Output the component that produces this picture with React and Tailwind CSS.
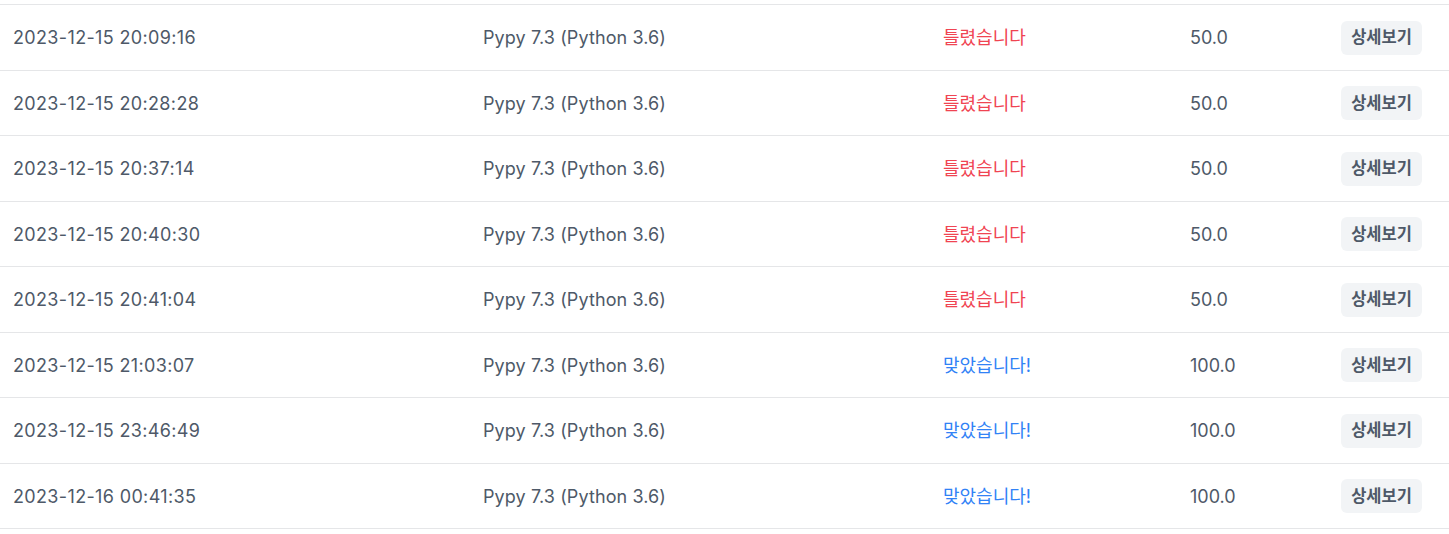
import React from 'react'

const rows = [
  { time: '2023-12-15 20:09:16', ok: false, score: '50.0' },
  { time: '2023-12-15 20:28:28', ok: false, score: '50.0' },
  { time: '2023-12-15 20:37:14', ok: false, score: '50.0' },
  { time: '2023-12-15 20:40:30', ok: false, score: '50.0' },
  { time: '2023-12-15 20:41:04', ok: false, score: '50.0' },
  { time: '2023-12-15 21:03:07', ok: true, score: '100.0' },
  { time: '2023-12-15 23:46:49', ok: true, score: '100.0' },
  { time: '2023-12-16 00:41:35', ok: true, score: '100.0' },
]

function App() {
  return (
    <div className="w-[1449px] h-[534px] bg-white overflow-hidden font-['Inter','Noto_Sans_CJK_KR',sans-serif]">
      <div className="h-[5px] border-b border-[#e5e6e8]" />
      {rows.map((r, i) => (
        <div
          key={i}
          className={`grid grid-cols-[470px_460px_247px_1fr] items-center border-b border-[#e5e6e8] text-[18px] text-[#4e5968] ${i % 2 === 0 ? 'h-[66px]' : 'h-[65px]'}`}
        >
          <div className="pl-[13px] tracking-[0.35px]">{r.time}</div>
          <div className="pl-[13px] tracking-[0.1px]">Pypy 7.3 (Python 3.6)</div>
          {r.ok ? (
            <div className="pl-[13px] text-[#3182f6]">맞았습니다!</div>
          ) : (
            <div className="pl-[13px] text-[#f04452]">틀렸습니다</div>
          )}
          <div className="flex items-center justify-between pl-[13px] pr-[27px]">
            <span>{r.score}</span>
            <button className="w-[81px] h-[34px] rounded-[6px] bg-[#f2f4f6] text-[16.5px] font-bold text-[#4e5968]">
              상세보기
            </button>
          </div>
        </div>
      ))}
    </div>
  )
}

export default App
